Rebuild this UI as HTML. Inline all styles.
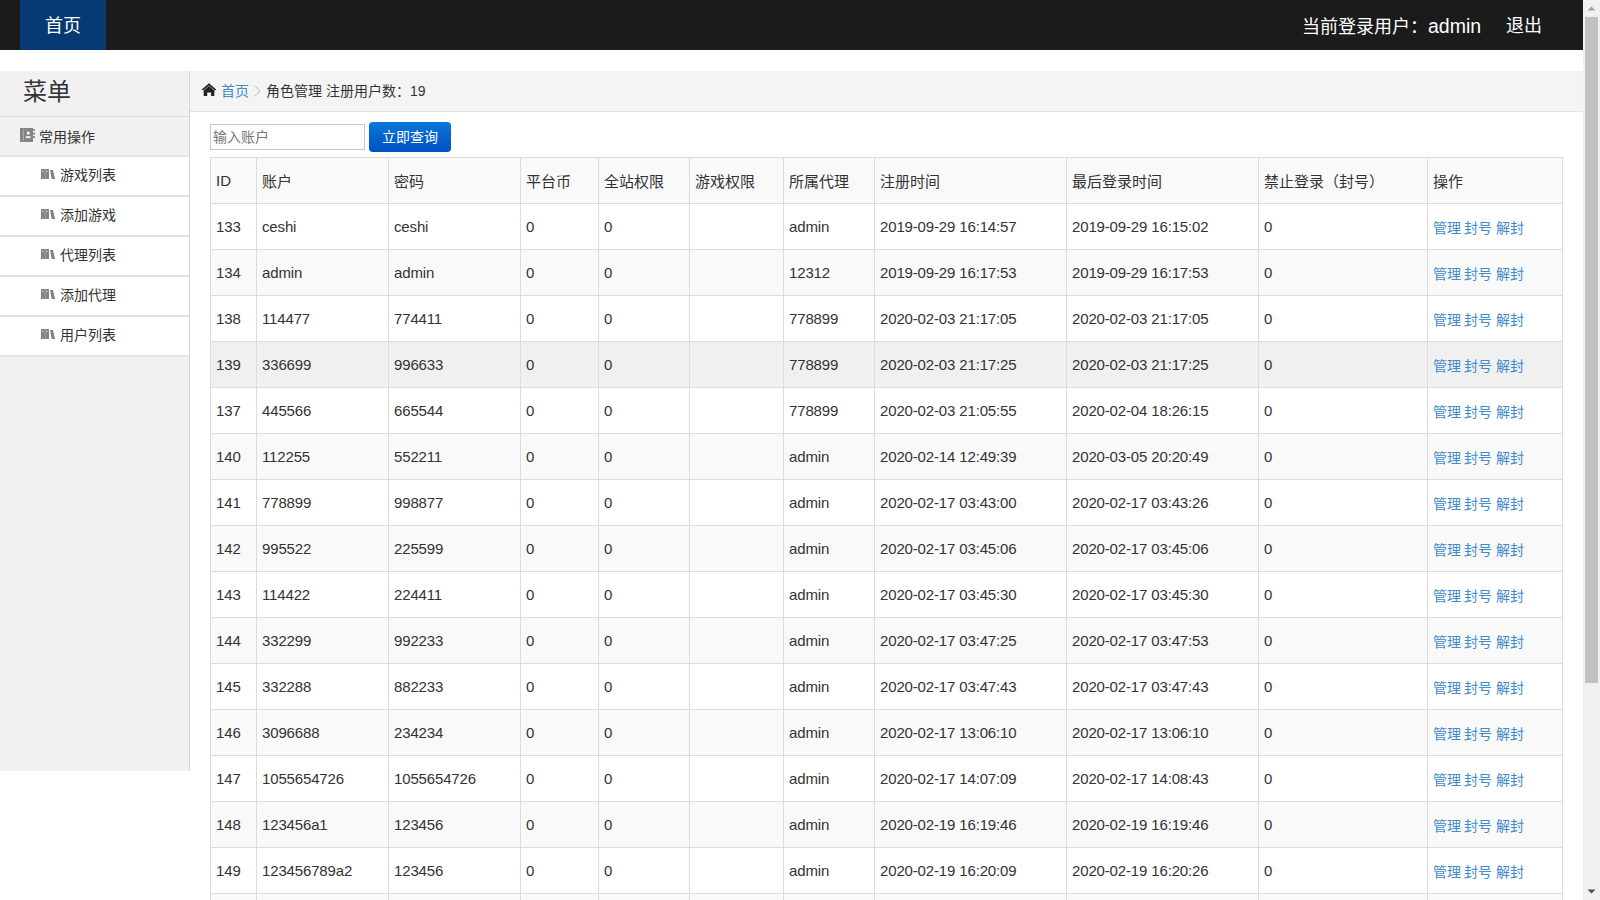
<!DOCTYPE html>
<html lang="zh-CN"><head><meta charset="utf-8">
<style>
*{box-sizing:border-box}
html,body{margin:0;padding:0;width:1600px;height:900px;overflow:hidden;background:#fff;font-family:"Liberation Sans",sans-serif;color:#333}
.nav{position:absolute;left:0;top:0;width:1583px;height:50px;background:#1b1b1b}
.tab{position:absolute;left:20px;top:0;width:86px;height:50px;background:#073a72;color:#fff;font-size:18px;line-height:53px;text-align:center}
.user{position:absolute;left:1302px;top:0;height:50px;line-height:52px;color:#fff;font-size:18px;white-space:nowrap}
.user b{font-weight:normal;font-size:19.5px}
.out{position:absolute;left:1506px;top:0;height:50px;line-height:52px;color:#fff;font-size:18px}
.side{position:absolute;left:0;top:71px;width:190px;height:700px;background:#f1f1f1;border-right:1px solid #d4d4d4}
.title{position:absolute;left:23px;top:4px;font-size:24px;line-height:34px;color:#333}
.grp{position:absolute;left:0;top:45px;width:189px;height:40px;border-top:1px solid #dedede}
.grp span{position:absolute;left:39px;top:10px;font-size:14px;line-height:20px}
.item{position:absolute;left:0;width:189px;height:40px;background:#fff;border-top:2px solid #e4e4e4}
.item .bk{position:absolute;left:41px;top:12px}
.item span{position:absolute;left:60px;top:8px;font-size:14px;line-height:20px}
.crumb{position:absolute;left:190px;top:71px;width:1393px;height:41px;background:#f4f4f4;border-bottom:1px solid #e2e2e2}
.crumb .t{position:absolute;top:10px;font-size:14px;line-height:20px}
.inp{position:absolute;left:210px;top:124px;width:155px;height:26px;border:1px solid #c8c8c8;background:#fff}
.inp span{position:absolute;left:2px;top:3px;font-size:14px;line-height:18px;color:#777}
.btn{position:absolute;left:369px;top:122px;width:82px;height:30px;border-radius:4px;background:linear-gradient(#0a77dc,#0050c2);color:#fff;font-size:14px;line-height:30px;text-align:center}
table{position:absolute;left:210px;top:157px;border-collapse:collapse;table-layout:fixed;width:1353px}
td,th{border:1px solid #dcdcdc;height:46px;padding:0 5px;font-weight:normal;text-align:left;white-space:nowrap;overflow:hidden}
th{font-size:15px;background:#f9f9f9}
td{font-size:15px;letter-spacing:-0.15px}
td.op{font-size:14px}
tr.s td{background:#f9f9f9}
tr.h td{background:#f0f0f0}
td a{color:#428bca;text-decoration:none}
.sb{position:absolute;left:1583px;top:0;width:17px;height:900px;background:#f1f1f1}
.thumb{position:absolute;left:2px;top:17px;width:13px;height:666px;background:#c1c1c1}
</style></head><body>
<div class="nav"><div class="tab">首页</div><div class="user">当前登录用户：<b>admin</b></div><div class="out">退出</div></div>
<div class="side">
<div class="title">菜单</div>
<div class="grp"><span>常用操作</span></div>

<svg width="16" height="14" viewBox="0 0 16 14" style="position:absolute;left:20px;top:57px;z-index:2"><rect x="0" y="0" width="13" height="14" fill="#858585"/><rect x="3" y="1" width="0.9" height="12" fill="#b0b0b0"/><rect x="13" y="1" width="2" height="1.7" fill="#858585"/><rect x="13" y="4.6" width="2" height="1.8" fill="#858585"/><rect x="13" y="8.2" width="2" height="1.8" fill="#858585"/><circle cx="8.2" cy="5.1" r="1.6" fill="#f4f4f4"/><rect x="5.9" y="8.2" width="4.6" height="1.9" fill="#f4f4f4"/></svg>
<div class="item" style="top:84px"><svg class="bk" width="15" height="10" viewBox="0 0 15 10"><rect x="0" y="0" width="8" height="10" fill="#858585"/><rect x="3.8" y="0" width="0.5" height="10" fill="#b5b5b5"/><path d="M9 1 L12 1 L14.2 10 L10.6 10 Z" fill="#858585"/><rect x="1.2" y="1.8" width="1.2" height="1.2" fill="#d8d8d8"/><rect x="5.2" y="1.8" width="1.2" height="1.2" fill="#d8d8d8"/></svg><span>游戏列表</span></div>
<div class="item" style="top:124px"><svg class="bk" width="15" height="10" viewBox="0 0 15 10"><rect x="0" y="0" width="8" height="10" fill="#858585"/><rect x="3.8" y="0" width="0.5" height="10" fill="#b5b5b5"/><path d="M9 1 L12 1 L14.2 10 L10.6 10 Z" fill="#858585"/><rect x="1.2" y="1.8" width="1.2" height="1.2" fill="#d8d8d8"/><rect x="5.2" y="1.8" width="1.2" height="1.2" fill="#d8d8d8"/></svg><span>添加游戏</span></div>
<div class="item" style="top:164px"><svg class="bk" width="15" height="10" viewBox="0 0 15 10"><rect x="0" y="0" width="8" height="10" fill="#858585"/><rect x="3.8" y="0" width="0.5" height="10" fill="#b5b5b5"/><path d="M9 1 L12 1 L14.2 10 L10.6 10 Z" fill="#858585"/><rect x="1.2" y="1.8" width="1.2" height="1.2" fill="#d8d8d8"/><rect x="5.2" y="1.8" width="1.2" height="1.2" fill="#d8d8d8"/></svg><span>代理列表</span></div>
<div class="item" style="top:204px"><svg class="bk" width="15" height="10" viewBox="0 0 15 10"><rect x="0" y="0" width="8" height="10" fill="#858585"/><rect x="3.8" y="0" width="0.5" height="10" fill="#b5b5b5"/><path d="M9 1 L12 1 L14.2 10 L10.6 10 Z" fill="#858585"/><rect x="1.2" y="1.8" width="1.2" height="1.2" fill="#d8d8d8"/><rect x="5.2" y="1.8" width="1.2" height="1.2" fill="#d8d8d8"/></svg><span>添加代理</span></div>
<div class="item" style="top:244px"><svg class="bk" width="15" height="10" viewBox="0 0 15 10"><rect x="0" y="0" width="8" height="10" fill="#858585"/><rect x="3.8" y="0" width="0.5" height="10" fill="#b5b5b5"/><path d="M9 1 L12 1 L14.2 10 L10.6 10 Z" fill="#858585"/><rect x="1.2" y="1.8" width="1.2" height="1.2" fill="#d8d8d8"/><rect x="5.2" y="1.8" width="1.2" height="1.2" fill="#d8d8d8"/></svg><span>用户列表</span></div>
<div class="item" style="top:284px;height:2px;background:transparent"></div>
</div>
<div class="crumb"><span class="t" style="left:31px;color:#428bca">首页</span><span class="t" style="left:76px">角色管理 注册用户数：19</span></div>
<svg width="16" height="14" viewBox="0 0 16 14" style="position:absolute;left:201px;top:83px"><path d="M8 0.2 L0.8 6.6 L2.1 7.6 L8 2.4 L13.9 7.6 L15.2 6.6 Z" fill="#222"/><path d="M2.7 7.4 L8 3.0 L13.3 7.4 L13.3 13 L10.1 13 L10.1 9.4 L6.2 9.4 L6.2 13 L2.7 13 Z" fill="#222"/></svg><svg width="8" height="14" style="position:absolute;left:253px;top:84px"><path d="M2 2 L7 7 L2 12" fill="none" stroke="#b8b8c8" stroke-width="1"/></svg>
<div class="inp"><span>输入账户</span></div><div class="btn">立即查询</div>
<table><colgroup><col style="width:46px"><col style="width:132px"><col style="width:132px"><col style="width:78px"><col style="width:91px"><col style="width:94px"><col style="width:91px"><col style="width:192px"><col style="width:192px"><col style="width:169px"><col style="width:135px"></colgroup>
<tr><th>ID</th><th>账户</th><th>密码</th><th>平台币</th><th>全站权限</th><th>游戏权限</th><th>所属代理</th><th>注册时间</th><th>最后登录时间</th><th>禁止登录（封号）</th><th>操作</th></tr>
<tr class=""><td>133</td><td>ceshi</td><td>ceshi</td><td>0</td><td>0</td><td></td><td>admin</td><td>2019-09-29 16:14:57</td><td>2019-09-29 16:15:02</td><td>0</td><td class="op"><a>管理</a> <a>封号</a> <a>解封</a></td></tr>
<tr class="s"><td>134</td><td>admin</td><td>admin</td><td>0</td><td>0</td><td></td><td>12312</td><td>2019-09-29 16:17:53</td><td>2019-09-29 16:17:53</td><td>0</td><td class="op"><a>管理</a> <a>封号</a> <a>解封</a></td></tr>
<tr class=""><td>138</td><td>114477</td><td>774411</td><td>0</td><td>0</td><td></td><td>778899</td><td>2020-02-03 21:17:05</td><td>2020-02-03 21:17:05</td><td>0</td><td class="op"><a>管理</a> <a>封号</a> <a>解封</a></td></tr>
<tr class="h"><td>139</td><td>336699</td><td>996633</td><td>0</td><td>0</td><td></td><td>778899</td><td>2020-02-03 21:17:25</td><td>2020-02-03 21:17:25</td><td>0</td><td class="op"><a>管理</a> <a>封号</a> <a>解封</a></td></tr>
<tr class=""><td>137</td><td>445566</td><td>665544</td><td>0</td><td>0</td><td></td><td>778899</td><td>2020-02-03 21:05:55</td><td>2020-02-04 18:26:15</td><td>0</td><td class="op"><a>管理</a> <a>封号</a> <a>解封</a></td></tr>
<tr class="s"><td>140</td><td>112255</td><td>552211</td><td>0</td><td>0</td><td></td><td>admin</td><td>2020-02-14 12:49:39</td><td>2020-03-05 20:20:49</td><td>0</td><td class="op"><a>管理</a> <a>封号</a> <a>解封</a></td></tr>
<tr class=""><td>141</td><td>778899</td><td>998877</td><td>0</td><td>0</td><td></td><td>admin</td><td>2020-02-17 03:43:00</td><td>2020-02-17 03:43:26</td><td>0</td><td class="op"><a>管理</a> <a>封号</a> <a>解封</a></td></tr>
<tr class="s"><td>142</td><td>995522</td><td>225599</td><td>0</td><td>0</td><td></td><td>admin</td><td>2020-02-17 03:45:06</td><td>2020-02-17 03:45:06</td><td>0</td><td class="op"><a>管理</a> <a>封号</a> <a>解封</a></td></tr>
<tr class=""><td>143</td><td>114422</td><td>224411</td><td>0</td><td>0</td><td></td><td>admin</td><td>2020-02-17 03:45:30</td><td>2020-02-17 03:45:30</td><td>0</td><td class="op"><a>管理</a> <a>封号</a> <a>解封</a></td></tr>
<tr class="s"><td>144</td><td>332299</td><td>992233</td><td>0</td><td>0</td><td></td><td>admin</td><td>2020-02-17 03:47:25</td><td>2020-02-17 03:47:53</td><td>0</td><td class="op"><a>管理</a> <a>封号</a> <a>解封</a></td></tr>
<tr class=""><td>145</td><td>332288</td><td>882233</td><td>0</td><td>0</td><td></td><td>admin</td><td>2020-02-17 03:47:43</td><td>2020-02-17 03:47:43</td><td>0</td><td class="op"><a>管理</a> <a>封号</a> <a>解封</a></td></tr>
<tr class="s"><td>146</td><td>3096688</td><td>234234</td><td>0</td><td>0</td><td></td><td>admin</td><td>2020-02-17 13:06:10</td><td>2020-02-17 13:06:10</td><td>0</td><td class="op"><a>管理</a> <a>封号</a> <a>解封</a></td></tr>
<tr class=""><td>147</td><td>1055654726</td><td>1055654726</td><td>0</td><td>0</td><td></td><td>admin</td><td>2020-02-17 14:07:09</td><td>2020-02-17 14:08:43</td><td>0</td><td class="op"><a>管理</a> <a>封号</a> <a>解封</a></td></tr>
<tr class="s"><td>148</td><td>123456a1</td><td>123456</td><td>0</td><td>0</td><td></td><td>admin</td><td>2020-02-19 16:19:46</td><td>2020-02-19 16:19:46</td><td>0</td><td class="op"><a>管理</a> <a>封号</a> <a>解封</a></td></tr>
<tr class=""><td>149</td><td>123456789a2</td><td>123456</td><td>0</td><td>0</td><td></td><td>admin</td><td>2020-02-19 16:20:09</td><td>2020-02-19 16:20:26</td><td>0</td><td class="op"><a>管理</a> <a>封号</a> <a>解封</a></td></tr>
<tr class="s"><td>150</td><td></td><td></td><td></td><td></td><td></td><td></td><td></td><td></td><td></td><td class="op"></td></tr>
</table>
<div class="sb"><svg width="17" height="17" style="position:absolute;left:0;top:0"><path d="M4.5 10.5 L8.5 6.5 L12.5 10.5 Z" fill="#a3a3a3"/></svg><div class="thumb"></div><svg width="17" height="17" style="position:absolute;left:0;top:883px"><path d="M4.5 6.5 L8.5 10.5 L12.5 6.5 Z" fill="#505050"/></svg></div>
</body></html>
